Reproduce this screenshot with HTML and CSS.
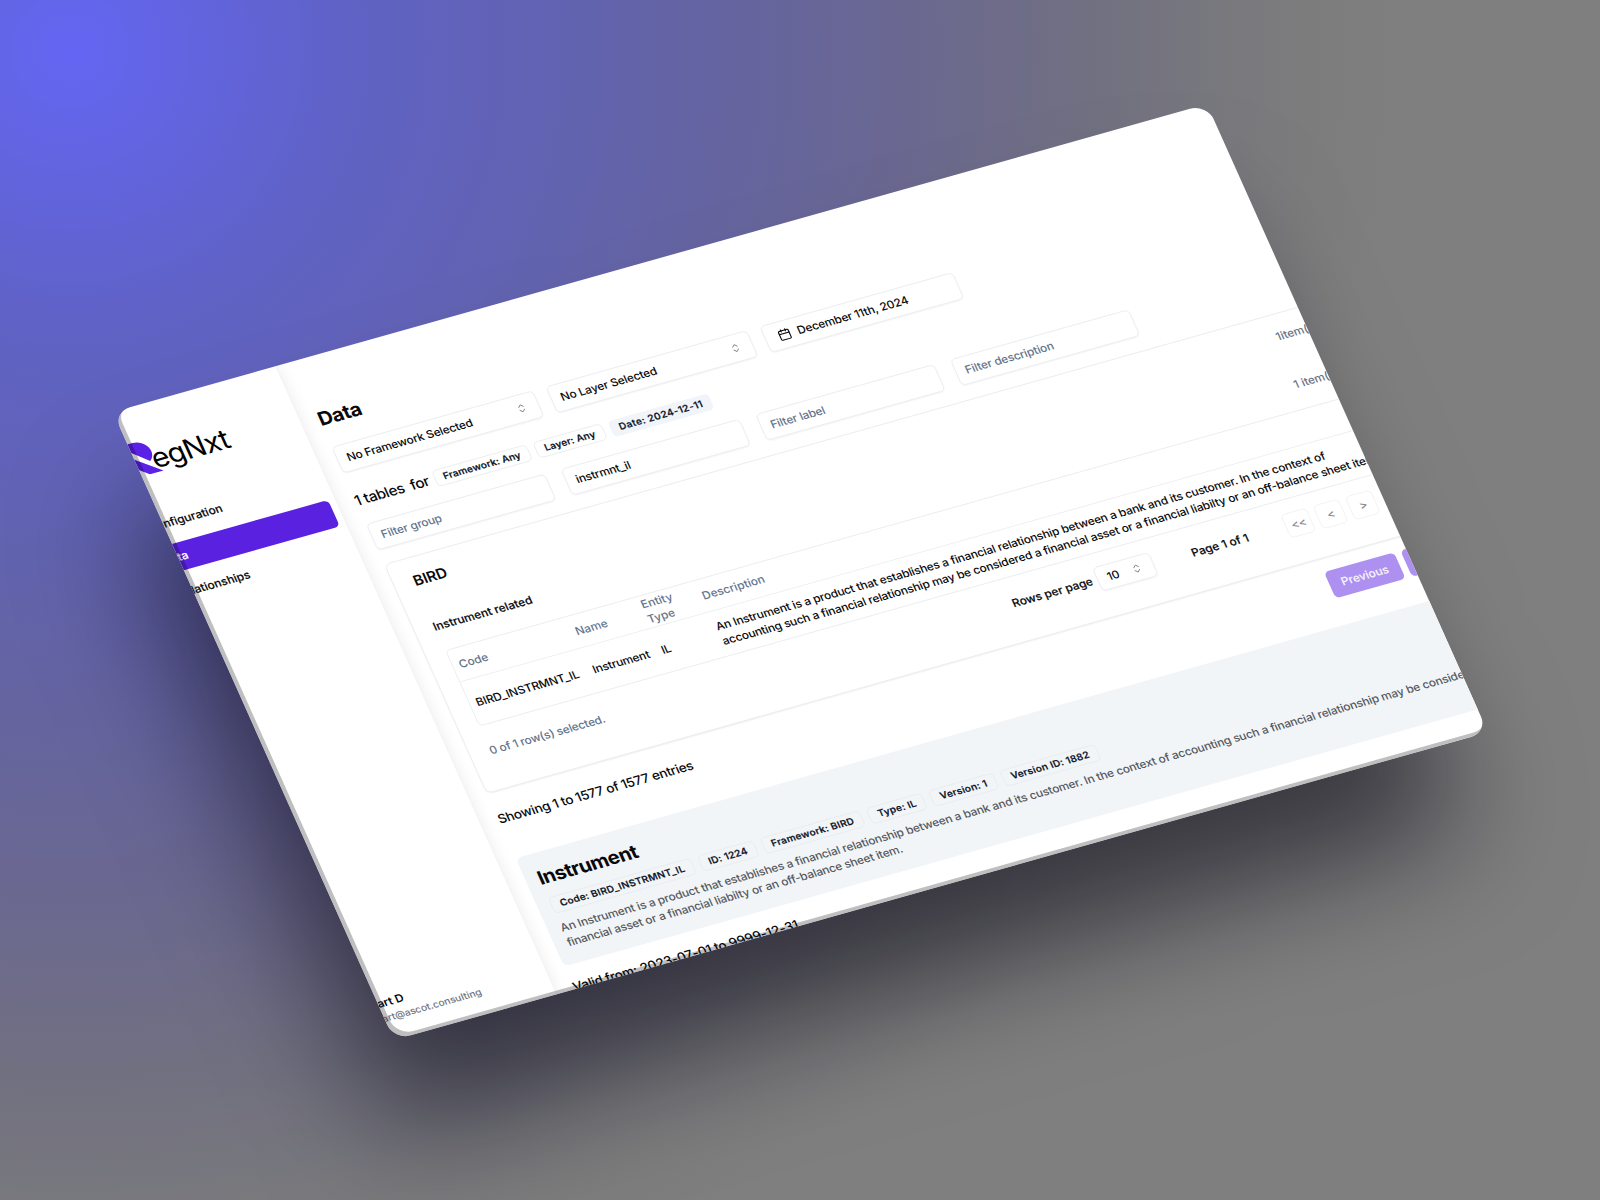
FILE: index.html
```html
<!DOCTYPE html>
<html lang="en">
<head>
<meta charset="utf-8">
<title>RegNxt – Data</title>
<link rel="stylesheet" href="styles.css">
</head>
<body>
<div class="stage">
<div class="card">
  <aside class="sidebar">
    <div class="logo">
      <svg class="logo-mark" viewBox="0 0 52 46" width="52" height="46"><path d="M8 0H29C40 0 47 8 47 16C47 21 45 25 41 28L12 1Z"/><path d="M12 11L51 44H34L0 14Z"/></svg>
      <span class="logo-text">egNxt</span>
    </div>
    <nav class="nav">
      <a class="nav-item">Configuration</a>
      <a class="nav-item active">Data</a>
      <a class="nav-item">Relationships</a>
    </nav>
    <div class="user">
      <div class="user-name">Bart D</div>
      <div class="user-mail">bart@ascot.consulting</div>
    </div>
  </aside>
  <main class="main">
    <h1 class="title">Data</h1>
    <div class="selects">
      <div class="control select">No Framework Selected<svg class="sort" viewBox="0 0 15 15" width="16" height="16"><path d="M4.6 6L7.5 3.1L10.4 6M4.6 9L7.5 11.9L10.4 9"/></svg></div>
      <div class="control select">No Layer Selected<svg class="sort" viewBox="0 0 15 15" width="16" height="16"><path d="M4.6 6L7.5 3.1L10.4 6M4.6 9L7.5 11.9L10.4 9"/></svg></div>
      <div class="control date"><svg class="cal" viewBox="0 0 24 24" width="16" height="16"><rect x="3" y="4" width="18" height="18" rx="2"/><path d="M8 2v4M16 2v4M3 10h18"/></svg>December 11th, 2024</div>
    </div>
    <div class="summary">
      <span>1 tables</span><span>for</span>
      <div class="summary-badges"><span class="badge">Framework: Any</span><span class="badge">Layer: Any</span><span class="badge muted">Date: 2024-12-11</span></div>
    </div>
    <div class="filters">
      <div class="control hint">Filter group</div>
      <div class="control">instrmnt_il</div>
      <div class="control hint">Filter label</div>
      <div class="control hint">Filter description</div>
    </div>
    <section class="group">
      <div class="group-head"><h2 class="group-title">BIRD</h2><span class="count">1item(s)</span></div>
      <div class="sub-head"><h3 class="sub-title">Instrument related</h3><span class="count">1 item(s)</span></div>
      <div class="table">
        <div class="row head"><div>Code</div><div>Name</div><div class="narrow">Entity Type</div><div>Description</div></div>
        <div class="row body"><div>BIRD_INSTRMNT_IL</div><div>Instrument</div><div>IL</div><div>An Instrument is a product that establishes a financial relationship between a bank and its customer. In the context of<br>accounting such a financial relationship may be considered a financial asset or a financial liabilty or an off-balance sheet item.</div></div>
      </div>
      <div class="pager">
        <span class="selected">0 of 1 row(s) selected.</span>
        <span class="pager-label">Rows per page</span>
        <div class="control size">10<svg class="sort" viewBox="0 0 15 15" width="16" height="16"><path d="M4.6 6L7.5 3.1L10.4 6M4.6 9L7.5 11.9L10.4 9"/></svg></div>
        <span class="page">Page 1 of 1</span>
        <div class="steps"><span class="step">&lt;&lt;</span><span class="step">&lt;</span><span class="step">&gt;</span></div>
      </div>
    </section>
    <div class="entries">
      <span class="showing">Showing 1 to 1577 of 1577 entries</span>
      <div class="entry-nav"><span class="button">Previous</span><span class="button">Next</span></div>
    </div>
    <section class="detail">
      <h2 class="detail-title">Instrument</h2>
      <div class="badges"><span class="badge">Code: BIRD_INSTRMNT_IL</span><span class="badge">ID: 1224</span><span class="badge">Framework: BIRD</span><span class="badge">Type: IL</span><span class="badge">Version: 1</span><span class="badge">Version ID: 1882</span></div>
      <p class="detail-text">An Instrument is a product that establishes a financial relationship between a bank and its customer. In the context of accounting such a financial relationship may be considered a<br>financial asset or a financial liabilty or an off-balance sheet item.</p>
    </section>
    <p class="valid">Valid from: 2023-07-01 to 9999-12-31</p>
  </main>
</div>
</div>
</body>
</html>
```
FILE: styles.css
```css
* { box-sizing: border-box; margin: 0; padding: 0; }
body { width: 1600px; height: 1200px; overflow: hidden; font-family: Inter, "Liberation Sans", sans-serif; }
.stage {
  width: 1600px; height: 1200px; overflow: hidden;
  background: radial-gradient(circle at 70px 50px, #6466f3 0, #6264de 130px, #6062c4 290px, #6263b0 500px, #6564a0 660px, #6a6890 840px, #727180 1040px, #7b7b7d 1200px, #7f7f7f 1330px);
}
.card {
  position: relative;
  display: flex; width: 1360px; height: 857px; overflow: hidden;
  border-radius: 21px; background: #fff; color: #09090b;
  font-size: 14px; line-height: 20px; font-weight: 450; letter-spacing: -.21px;
  transform-origin: 0 0;
  transform: matrix(.80434, -.22647, .32792, .73294, 113, 412);
  box-shadow: -54px 122px 145px -15px rgba(8, 6, 20, .59);
}
.card::after {
  content: ""; position: absolute; inset: 0; border-radius: 21px;
  box-shadow: inset 5px -4.5px 0 rgba(0, 0, 0, .25);
}
.sidebar {
  flex: none; display: flex; flex-direction: column;
  width: 256px; margin-left: -52.6px; padding: 44px 8px 19px 16px;
  box-shadow: 0 0 18px rgba(0, 0, 0, .08); border-right: 1px solid #f1f1f3;
}
.logo { display: flex; align-items: flex-start; height: 91px; padding-left: 12.6px; }
.logo-mark { flex: none; fill: #5b21e6; }
.logo-text { margin: 2px 0 0 -8.5px; font-size: 35px; line-height: 48px; font-weight: 400; letter-spacing: -1px; color: #000; }
.nav { display: flex; flex-direction: column; gap: 9px; }
.nav-item { height: 36px; padding: 8px 18px; border-radius: 6px; font-weight: 500; letter-spacing: 0; -webkit-text-stroke: .2px currentColor; }
.nav-item.active { background: #5b21e0; color: #fff; }
.user { margin-top: auto; padding-left: 26.5px; letter-spacing: 0; }
.user-name { font-weight: 600; }
.user-mail { font-size: 12px; color: #6b7280; letter-spacing: 0; }

.main { flex: none; display: flex; flex-direction: column; width: 1256px; padding: 64px 0 0 20.5px; }
.main > * { flex-shrink: 0; }
.title { font-size: 24px; line-height: 32px; font-weight: 700; letter-spacing: -.4px; margin-left: -1px; }
.selects { display: flex; gap: 16px; margin-top: 21px; }
.control {
  display: flex; align-items: center; height: 36px; padding: 0 12px 0 11px;
  border: 1px solid #e8ebee; border-radius: 6px; box-shadow: 0 1px 2px rgba(0, 0, 0, .06);
}
.select { width: 250px; justify-content: space-between; }
.sort { fill: none; stroke: #09090b; stroke-width: 1; opacity: .5; }
.date { width: 240px; gap: 8px; padding-left: 15px; }
.cal { fill: none; stroke: #09090b; stroke-width: 2; stroke-linecap: round; stroke-linejoin: round; }
.summary { display: flex; align-items: center; gap: 8px; height: 24px; margin: 26px 0 0 -1px; font-size: 18px; line-height: 24px; letter-spacing: -.45px; }
.summary-badges { display: flex; gap: 8px; margin-left: -1px; }
.badge {
  height: 22px; padding: 2px 10px; border: 1px solid #e8ebee; border-radius: 6px;
  font-size: 12px; line-height: 16px; font-weight: 600; letter-spacing: .19px; color: #0f172a; white-space: nowrap;
  -webkit-text-stroke: .15px currentColor;
}
.summary .badge { letter-spacing: .08px; }
.summary .muted { border-color: transparent; background: #f1f5f9; letter-spacing: .34px; }
.filters { display: flex; gap: 20px; margin-top: 19px; }
.filters .control { width: 222px; }
.hint { color: #64748b; }
.group {
  width: 1180px; height: 313px; margin-top: 19px; padding: 23px 0 0 22.5px;
  border: 1px solid #e8ebee; border-radius: 8px; box-shadow: 0 1px 2px rgba(0, 0, 0, .08);
}
.group-head, .sub-head { display: flex; width: 1140px; }
.group-head { height: 59px; }
.sub-head { height: 42px; }
.count { margin-left: auto; width: 70px; color: #6b7280; font-weight: 500; letter-spacing: -.1px; }
.group-title { font-size: 18px; line-height: 28px; font-weight: 600; letter-spacing: -.2px; margin: -7.5px 0 0 1px; }
.group-head .count { margin-top: -5px; width: 66px; }
.sub-title { font-size: 14px; font-weight: 500; letter-spacing: 0; -webkit-text-stroke: .2px currentColor; }
.table { width: 1136px; margin-left: 1.5px; border: 1px solid #e8ebee; border-radius: 6px; }
.row { display: grid; grid-template-columns: 145px 85.5px 72px 1fr; align-items: center; padding-left: 7.5px; white-space: nowrap; }
.head { height: 43px; color: #64748b; border-bottom: 1px solid #e8ebee; font-weight: 500; letter-spacing: 0; }
.body { height: 59px; }
.narrow { width: 50px; white-space: normal; }
.pager { display: flex; align-items: center; height: 32px; margin: 17px 0 0 1px; white-space: nowrap; }
.selected { width: 650px; color: #64748b; }
.pager-label { width: 106px; font-weight: 500; letter-spacing: -.02px; -webkit-text-stroke: .2px currentColor; }
.size { width: 70px; height: 32px; justify-content: space-between; }
.page { width: 100px; margin: 0 32px; text-align: center; font-weight: 500; letter-spacing: 0; -webkit-text-stroke: .2px currentColor; }
.steps { display: flex; gap: 8px; }
.step { width: 32px; height: 32px; border: 1px solid #eff1f4; border-radius: 6px; text-align: center; line-height: 29px; font-weight: 500; color: #84848a; }
.entries { display: flex; align-items: center; height: 36px; margin-top: 17px; }
.showing { width: 1034px; font-size: 16px; letter-spacing: -.32px; }
.entry-nav { display: flex; gap: 8px; }
.button { height: 36px; padding: 8px 14.5px; border-radius: 6px; background: #ad90ef; color: #f8f4ff; font-weight: 500; letter-spacing: 0; -webkit-text-stroke: .15px currentColor; }
.detail { width: 1180px; height: 148px; margin-top: 35px; padding: 17px 15px; background: #f2f5f7; border-radius: 8px; white-space: nowrap; }
.detail-title { font-size: 24px; line-height: 32px; font-weight: 700; letter-spacing: -.6px; }
.badges { display: flex; gap: 8px; margin: 10px 0 0 1px; }
.detail-text { margin: 9px 0 0 .5px; color: #55595f; }
.valid { margin-top: 16px; font-size: 16px; line-height: 24px; letter-spacing: -.28px; }
```
